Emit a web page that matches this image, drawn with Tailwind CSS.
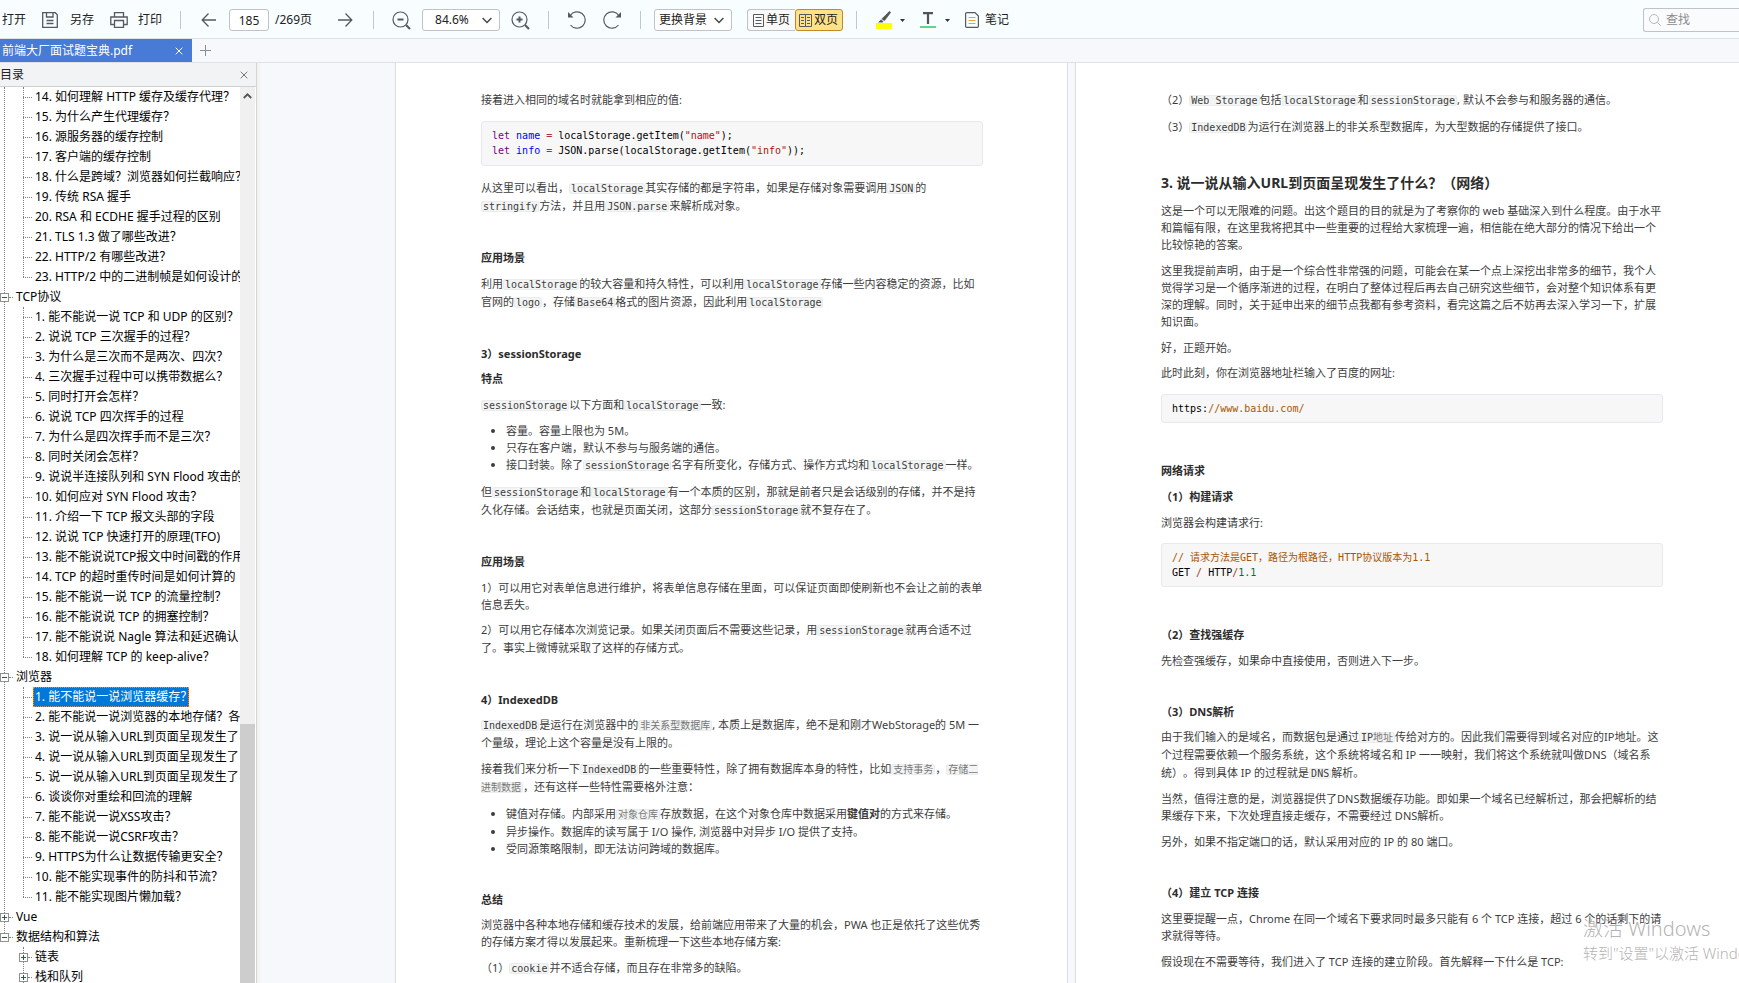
<!DOCTYPE html>
<html lang="zh-CN">
<head>
<meta charset="utf-8">
<title>前端大厂面试题宝典.pdf</title>
<script src="https://cdn.jsdelivr.net/npm/@tailwindcss/browser@4"></script>
</head>
<body class="flex h-screen flex-col overflow-hidden bg-[#f7f8fb] font-['Noto_Sans','Noto_Sans_CJK_SC',sans-serif] text-xs text-black [text-spacing-trim:space-all]">

<!-- Toolbar -->
<header class="flex h-[39px] shrink-0 items-center whitespace-nowrap border-b border-[#dfe1e5] bg-[#f8fdff] pl-[2px] pt-[2px] text-xs text-[#222]">
  <button type="button">打开</button>
  <button type="button" class="ml-4 flex items-center gap-3">
    <svg class="h-4 w-4" viewBox="0 0 16 16" fill="none" stroke="#555a60" stroke-width="1.3"><path d="M1 .7h12.3L15.300 2.700v12.600H.7V.7z"/><path d="M4.500 .7v4.300h6.500V.7M4.500 8.500h7M4.500 11.500h7"/></svg>另存</button>
  <button type="button" class="ml-4 flex items-center gap-[10px]">
    <svg class="h-4 w-[18px]" viewBox="0 0 18 16" fill="none" stroke="#555a60" stroke-width="1.3"><path d="M4.500 5V.7h9V5M4.500 12.500H.8V5h16.400v7.500h-3.700"/><path d="M4.500 8.500h9v6.800h-9z"/></svg>打印</button>
  <span class="ml-[18px] h-[18px] w-px bg-[#c3c6ca]"></span>
  <button type="button" aria-label="上一页" class="ml-5"><svg class="h-4 w-4" viewBox="0 0 16 16" fill="none" stroke="#555a60" stroke-width="1.3"><path d="M15 8H1.200M7.500 1.500 1.200 8l6.300 6.500"/></svg></button>
  <input aria-label="页码" value="185" class="ml-3 h-[22px] w-10 rounded-[3px] border border-[#bfc3c8] bg-white text-center text-xs">
  <span class="ml-[6px] w-[52px]">/269页</span>
  <button type="button" aria-label="下一页" class="ml-[10px]"><svg class="h-4 w-4" viewBox="0 0 16 16" fill="none" stroke="#555a60" stroke-width="1.3"><path d="M1 8h13.800M8.500 1.500 14.800 8l-6.300 6.500"/></svg></button>
  <span class="ml-5 h-[18px] w-px bg-[#c3c6ca]"></span>
  <button type="button" aria-label="缩小" class="ml-[18px]"><svg class="h-[19px] w-[19px]" viewBox="0 0 19 19" fill="none" stroke="#555a60" stroke-width="1.200"><circle cx="8.500" cy="8.500" r="7.500"/><path d="M5.500 8.500h6" stroke-width="2"/><path d="m14 14 4 4" stroke-width="2.200"/></svg></button>
  <div class="relative ml-[11px]">
    <select aria-label="缩放比例" class="h-[22px] w-[78px] appearance-none rounded-[3px] border border-[#bfc3c8] bg-white pl-3 text-xs"><option>84.6%</option></select>
    <svg class="pointer-events-none absolute right-[8px] top-2 h-[7px] w-[10px]" viewBox="0 0 10 7" fill="none" stroke="#444" stroke-width="1.400"><path d="m.6 1 4.400 4.500L9.400 1"/></svg>
  </div>
  <button type="button" aria-label="放大" class="ml-[11px]"><svg class="h-[19px] w-[19px]" viewBox="0 0 19 19" fill="none" stroke="#555a60" stroke-width="1.200"><circle cx="8.500" cy="8.500" r="7.500"/><path d="M5.500 8.500h6M8.500 5.500v6" stroke-width="2"/><path d="m14 14 4 4" stroke-width="2.200"/></svg></button>
  <span class="ml-[18px] h-[18px] w-px bg-[#c3c6ca]"></span>
  <button type="button" aria-label="撤销" class="ml-[18px]"><svg class="h-5 w-5" viewBox="0 0 20 20" fill="none" stroke="#555a60" stroke-width="1.200"><path d="M3.200 5.500A8.200 8.200 0 1 1 3.500 15"/><path d="M1 2v5.500h5.500z" fill="#555a60" stroke="none"/></svg></button>
  <button type="button" aria-label="重做" class="ml-[15px]"><svg class="h-5 w-5" viewBox="0 0 20 20" fill="none" stroke="#555a60" stroke-width="1.200"><path d="M16.800 5.500A8.200 8.200 0 1 0 16.500 15"/><path d="M19 2v5.500h-5.500z" fill="#555a60" stroke="none"/></svg></button>
  <span class="ml-[18px] h-[18px] w-px bg-[#c3c6ca]"></span>
  <div class="relative ml-[13px]">
    <select aria-label="更换背景" class="h-[22px] w-[78px] appearance-none rounded-[3px] border border-[#bfc3c8] bg-white pl-1 text-xs"><option>更换背景</option></select>
    <svg class="pointer-events-none absolute right-[8px] top-2 h-[7px] w-[10px]" viewBox="0 0 10 7" fill="none" stroke="#444" stroke-width="1.400"><path d="m.6 1 4.400 4.500L9.400 1"/></svg>
  </div>
  <div class="ml-[15px] flex">
    <button type="button" aria-pressed="false" class="flex h-[22px] w-12 items-center gap-[2px] rounded-l-[3px] border border-r-0 border-[#bfc3c8] bg-[#f9f9f9] pl-[5px]">
      <svg class="h-[13px] w-[11px] shrink-0" viewBox="0 0 11 13" fill="none" stroke="#555a60"><path d="M.5.5h10v12H.5zM2.500 3.500h6M2.500 6.500h6M2.500 9.500h6"/></svg>单页</button>
    <button type="button" aria-pressed="true" class="flex h-[22px] w-12 items-center gap-[2px] rounded-[3px] border border-[#c08a2c] bg-[#ffe186] pl-[3px]">
      <svg class="h-[13px] w-[13px] shrink-0" viewBox="0 0 13 13" fill="none" stroke="#555a60"><path d="M.5.5h12v12H.5zM6.500.5v12M2 3.500h3M2 6.500h3M2 9.500h3M8 3.500h3M8 6.500h3M8 9.500h3"/></svg>双页</button>
  </div>
  <span class="ml-[13px] h-[18px] w-px bg-[#c3c6ca]"></span>
  <button type="button" aria-label="高亮" class="ml-[19px] flex items-center gap-2"><svg class="h-[18px] w-4" viewBox="0 0 16 18"><path d="M0 12h16v6H0z" fill="#ff0"/><path d="M13.500 0 15 1.500 8.500 10 5.500 8zM5 8.500 7.500 10.500 6.500 11.500H2z" fill="#555"/></svg><svg class="h-[3px] w-[5px]" viewBox="0 0 5 3"><path d="M0 0h5L2.500 3z" fill="#333"/></svg></button>
  <button type="button" aria-label="文字颜色" class="ml-[15px] flex items-center gap-[9px]"><svg class="h-4 w-4" viewBox="0 0 16 16"><path d="M0 14h16v2H0z" fill="#6bd089"/><path d="M3 0h10v2.200H9.100V12H6.900V2.200H3z" fill="#555"/></svg><svg class="h-[3px] w-[5px]" viewBox="0 0 5 3"><path d="M0 0h5L2.500 3z" fill="#333"/></svg></button>
  <button type="button" class="ml-[15px] flex items-center gap-[6px]"><svg class="h-4 w-[14px]" viewBox="0 0 14 16" fill="none"><path d="M2 .6h8L13.400 4v10.200q0 1.200-1.200 1.200H1.800Q.6 15.400.6 14.200V1.800Q.6.6 2 .6z" stroke="#555a60" stroke-width="1.200"/><path d="M3.500 5.500h7M3.500 8.500h7M3.500 11.500h7" stroke="#e3a92c" stroke-width="1.200"/></svg>笔记</button>
  <label class="ml-auto flex h-6 w-24 items-center gap-[5px] overflow-hidden rounded-l-[3px] border border-r-0 border-[#bfc3c8] bg-[#fafbfc] pl-[5px]">
    <svg class="h-3 w-3 shrink-0" viewBox="0 0 12 12" fill="none" stroke="#b3b7bc"><circle cx="5" cy="5" r="4.500"/><path d="m8.300 8.300 3.400 3.400"/></svg>
    <input type="search" aria-label="查找" placeholder="查找" class="w-full bg-transparent text-xs outline-none placeholder:text-[#8c8c8c]">
  </label>
</header>

<!-- Tabs -->
<nav class="flex h-6 shrink-0 items-center border-b border-[#dfe1e5]">
  <div class="flex h-full w-48 items-center justify-between bg-[#477bd6] pl-[2px] pr-[9px] text-white">
    <a href="#doc">前端大厂面试题宝典.pdf</a>
    <button type="button" aria-label="关闭标签"><svg class="h-2 w-2" viewBox="0 0 8 8" stroke="#fff"><path d="m.7.7 6.600 6.600M7.300.7.7 7.300"/></svg></button>
  </div>
  <button type="button" aria-label="新建标签" class="ml-2"><svg class="h-[11px] w-[11px]" viewBox="0 0 11 11" stroke="#8a8d91"><path d="M5.500 0v11M0 5.500h11"/></svg></button>
</nav>

<div class="flex min-h-0 flex-1">
  <!-- Outline -->
  <aside class="flex w-[257px] shrink-0 flex-col border-r border-[#d4d4d4] bg-white">
    <div class="flex h-6 shrink-0 items-center justify-between border-b border-[#d0d0d0] bg-[#f2f3f5] pr-2 text-[#222]">
      <h2>目录</h2>
      <button type="button" aria-label="关闭目录"><svg class="h-2 w-2" viewBox="0 0 8 8" stroke="#777"><path d="m.7.7 6.600 6.600M7.300.7.7 7.300"/></svg></button>
    </div>
    <div class="flex min-h-0 flex-1">
      <div class="w-60 shrink-0 overflow-hidden whitespace-nowrap leading-5">
        <ul class="relative before:absolute before:left-1 before:top-0 before:h-[850px] before:border-l before:border-dotted before:border-[#808080]">
          <li>
            <ul class="relative before:absolute before:bottom-[10px] before:left-[23px] before:top-0 before:border-l before:border-dotted before:border-[#808080] [&>li]:relative [&>li]:h-5 [&>li]:pl-[35px] [&>li]:before:absolute [&>li]:before:left-[23px] [&>li]:before:top-[10px] [&>li]:before:w-[9px] [&>li]:before:border-t [&>li]:before:border-dotted [&>li]:before:border-[#808080]">
              <li><a href="#c14">14. 如何理解 HTTP 缓存及缓存代理？</a></li>
              <li><a href="#c15">15. 为什么产生代理缓存？</a></li>
              <li><a href="#c16">16. 源服务器的缓存控制</a></li>
              <li><a href="#c17">17. 客户端的缓存控制</a></li>
              <li><a href="#c18">18. 什么是跨域？浏览器如何拦截响应？</a></li>
              <li><a href="#c19">19. 传统 RSA 握手</a></li>
              <li><a href="#c20">20. RSA 和 ECDHE 握手过程的区别</a></li>
              <li><a href="#c21">21. TLS 1.3 做了哪些改进？</a></li>
              <li><a href="#c22">22. HTTP/2 有哪些改进？</a></li>
              <li><a href="#c23">23. HTTP/2 中的二进制帧是如何设计的</a></li>
            </ul>
          </li>
          <li>
            <div class="relative flex h-5 items-center">
              <button type="button" aria-label="折叠" class="flex h-[9px] w-[9px] items-center justify-center border border-[#919191] bg-white"><span class="h-px w-[5px] bg-[#2d4d9c]"></span></button>
              <span class="mr-[3px] w-1 border-t border-dotted border-[#808080]"></span>
              <a href="#tcp">TCP协议</a>
            </div>
            <ul class="relative before:absolute before:bottom-[10px] before:left-[23px] before:top-0 before:border-l before:border-dotted before:border-[#808080] [&>li]:relative [&>li]:h-5 [&>li]:pl-[35px] [&>li]:before:absolute [&>li]:before:left-[23px] [&>li]:before:top-[10px] [&>li]:before:w-[9px] [&>li]:before:border-t [&>li]:before:border-dotted [&>li]:before:border-[#808080]">
              <li><a href="#t1">1. 能不能说一说 TCP 和 UDP 的区别？</a></li>
              <li><a href="#t2">2. 说说 TCP 三次握手的过程？</a></li>
              <li><a href="#t3">3. 为什么是三次而不是两次、四次？</a></li>
              <li><a href="#t4">4. 三次握手过程中可以携带数据么？</a></li>
              <li><a href="#t5">5. 同时打开会怎样？</a></li>
              <li><a href="#t6">6. 说说 TCP 四次挥手的过程</a></li>
              <li><a href="#t7">7. 为什么是四次挥手而不是三次？</a></li>
              <li><a href="#t8">8. 同时关闭会怎样？</a></li>
              <li><a href="#t9">9. 说说半连接队列和 SYN Flood 攻击的</a></li>
              <li><a href="#t10">10. 如何应对 SYN Flood 攻击？</a></li>
              <li><a href="#t11">11. 介绍一下 TCP 报文头部的字段</a></li>
              <li><a href="#t12">12. 说说 TCP 快速打开的原理(TFO)</a></li>
              <li><a href="#t13">13. 能不能说说TCP报文中时间戳的作用</a></li>
              <li><a href="#t14">14. TCP 的超时重传时间是如何计算的</a></li>
              <li><a href="#t15">15. 能不能说一说 TCP 的流量控制？</a></li>
              <li><a href="#t16">16. 能不能说说 TCP 的拥塞控制？</a></li>
              <li><a href="#t17">17. 能不能说说 Nagle 算法和延迟确认</a></li>
              <li><a href="#t18">18. 如何理解 TCP 的 keep-alive？</a></li>
            </ul>
          </li>
          <li>
            <div class="relative flex h-5 items-center">
              <button type="button" aria-label="折叠" class="flex h-[9px] w-[9px] items-center justify-center border border-[#919191] bg-white"><span class="h-px w-[5px] bg-[#2d4d9c]"></span></button>
              <span class="mr-[3px] w-1 border-t border-dotted border-[#808080]"></span>
              <a href="#browser">浏览器</a>
            </div>
            <ul class="relative before:absolute before:bottom-[10px] before:left-[23px] before:top-0 before:border-l before:border-dotted before:border-[#808080] [&>li]:relative [&>li]:h-5 [&>li]:pl-[35px] [&>li]:before:absolute [&>li]:before:left-[23px] [&>li]:before:top-[10px] [&>li]:before:w-[9px] [&>li]:before:border-t [&>li]:before:border-dotted [&>li]:before:border-[#808080]">
              <li class="flex"><a href="#b1" class="-ml-[2px] flex h-5 w-[156px] items-center overflow-hidden border border-dotted border-[#ff8728] bg-[#0078d7] pl-px text-white">1. 能不能说一说浏览器缓存？</a></li>
              <li><a href="#b2">2. 能不能说一说浏览器的本地存储？各</a></li>
              <li><a href="#b3">3. 说一说从输入URL到页面呈现发生了</a></li>
              <li><a href="#b4">4. 说一说从输入URL到页面呈现发生了</a></li>
              <li><a href="#b5">5. 说一说从输入URL到页面呈现发生了</a></li>
              <li><a href="#b6">6. 谈谈你对重绘和回流的理解</a></li>
              <li><a href="#b7">7. 能不能说一说XSS攻击？</a></li>
              <li><a href="#b8">8. 能不能说一说CSRF攻击？</a></li>
              <li><a href="#b9">9. HTTPS为什么让数据传输更安全？</a></li>
              <li><a href="#b10">10. 能不能实现事件的防抖和节流？</a></li>
              <li><a href="#b11">11. 能不能实现图片懒加载？</a></li>
            </ul>
          </li>
          <li class="relative flex h-5 items-center">
            <button type="button" aria-label="展开" class="relative flex h-[9px] w-[9px] items-center justify-center border border-[#919191] bg-white"><span class="h-px w-[5px] bg-[#2d4d9c]"></span><span class="absolute h-[5px] w-px bg-[#2d4d9c]"></span></button>
            <span class="mr-[3px] w-1 border-t border-dotted border-[#808080]"></span>
            <a href="#vue">Vue</a>
          </li>
          <li>
            <div class="relative flex h-5 items-center">
              <button type="button" aria-label="折叠" class="flex h-[9px] w-[9px] items-center justify-center border border-[#919191] bg-white"><span class="h-px w-[5px] bg-[#2d4d9c]"></span></button>
              <span class="mr-[3px] w-1 border-t border-dotted border-[#808080]"></span>
              <a href="#algo">数据结构和算法</a>
            </div>
            <ul class="relative pl-[19px] before:absolute before:bottom-0 before:left-[23px] before:top-0 before:border-l before:border-dotted before:border-[#808080]">
              <li class="relative flex h-5 items-center">
                <button type="button" aria-label="展开" class="relative flex h-[9px] w-[9px] items-center justify-center border border-[#919191] bg-white"><span class="h-px w-[5px] bg-[#2d4d9c]"></span><span class="absolute h-[5px] w-px bg-[#2d4d9c]"></span></button>
                <span class="mr-[3px] w-1 border-t border-dotted border-[#808080]"></span>
                <a href="#list">链表</a>
              </li>
              <li class="relative flex h-5 items-center">
                <button type="button" aria-label="展开" class="relative flex h-[9px] w-[9px] items-center justify-center border border-[#919191] bg-white"><span class="h-px w-[5px] bg-[#2d4d9c]"></span><span class="absolute h-[5px] w-px bg-[#2d4d9c]"></span></button>
                <span class="mr-[3px] w-1 border-t border-dotted border-[#808080]"></span>
                <a href="#stack">栈和队列</a>
              </li>
            </ul>
          </li>
        </ul>
      </div>
      <div class="flex w-[15px] flex-col bg-[#f0f0f0]">
        <svg class="mx-auto mt-[6px] h-[6px] w-[9px] shrink-0" viewBox="0 0 9 6" fill="none" stroke="#555" stroke-width="1.800"><path d="m.8 5 3.700-3.700L8.200 5"/></svg>
        <div class="mt-auto h-[259px] bg-[#cdcdcd]"></div>
      </div>
    </div>
  </aside>
  <div class="w-[3px] shrink-0 bg-[#f2f2f3]"></div>

  <!-- Two-page view -->
  <main id="doc" class="relative flex min-w-0 flex-1 gap-[7px] overflow-hidden whitespace-nowrap pl-[135px] text-[11px] leading-[17px] text-[#3d3d3d] [&_code]:rounded-[3px] [&_code]:bg-[#f3f4f4] [&_code]:px-[2px] [&_code]:font-['DejaVu_Sans_Mono','Noto_Sans_CJK_SC',monospace] [&_code]:text-[10px] [&_code]:leading-3 [&_code]:ring-1 [&_code]:ring-inset [&_code]:ring-[#eaecee] [&_h3]:font-bold [&_h3]:text-[#2c2c2c] [&_pre]:rounded-[3px] [&_pre]:border [&_pre]:border-[#e7eaed] [&_pre]:bg-[#f7f7f7] [&_pre]:px-[10px] [&_pre]:font-['DejaVu_Sans_Mono','Noto_Sans_CJK_SC',monospace] [&_pre]:text-[10px] [&_pre]:leading-[15px] [&_pre]:text-black">
    <article class="w-[673px] shrink-0 border-x border-[#dcdde0] bg-white pl-[85px] pr-[84px] pt-7">
      <p>接着进入相同的域名时就能拿到相应的值:</p>
      <pre class="mt-[13px] pb-[7px] pt-[6px]"><span class="text-[#770088]">let</span> <span class="text-[#0000ff]">name</span> <span class="text-[#b03030]">=</span> localStorage.getItem(<span class="text-[#aa1111]">"name"</span>);
<span class="text-[#770088]">let</span> <span class="text-[#0000ff]">info</span> <span class="text-[#b03030]">=</span> JSON.parse(localStorage.getItem(<span class="text-[#aa1111]">"info"</span>));</pre>
      <p class="mt-[13px] leading-[18px]">从这里可以看出，<code>localStorage</code>其实存储的都是字符串，如果是存储对象需要调用<code>JSON</code>的<br><code>stringify</code>方法，并且用<code>JSON.parse</code>来解析成对象。</p>
      <h3 class="mt-[34px]">应用场景</h3>
      <p class="mt-[9px] leading-[18px]">利用<code>localStorage</code>的较大容量和持久特性，可以利用<code>localStorage</code>存储一些内容稳定的资源，比如<br>官网的<code>logo</code>，存储<code>Base64</code>格式的图片资源，因此利用<code>localStorage</code></p>
      <h3 class="mt-[34px]">3）sessionStorage</h3>
      <h3 class="mt-2">特点</h3>
      <p class="mt-[9px] leading-[18px]"><code>sessionStorage</code>以下方面和<code>localStorage</code>一致:</p>
      <ul class="mt-2 list-disc pl-[25px]">
        <li>容量。容量上限也为 5M。</li>
        <li>只存在客户端，默认不参与与服务端的通信。</li>
        <li class="leading-[18px]">接口封装。除了<code>sessionStorage</code>名字有所变化，存储方式、操作方式均和<code>localStorage</code>一样。</li>
      </ul>
      <p class="mt-[9px] leading-[18px]">但<code>sessionStorage</code>和<code>localStorage</code>有一个本质的区别，那就是前者只是会话级别的存储，并不是持<br>久化存储。会话结束，也就是页面关闭，这部分<code>sessionStorage</code>就不复存在了。</p>
      <h3 class="mt-[34px]">应用场景</h3>
      <p class="mt-[9px]">1）可以用它对表单信息进行维护，将表单信息存储在里面，可以保证页面即使刷新也不会让之前的表单<br>信息丢失。</p>
      <p class="mt-2 leading-[18px]">2）可以用它存储本次浏览记录。如果关闭页面后不需要这些记录，用<code>sessionStorage</code>就再合适不过<br>了。事实上微博就采取了这样的存储方式。</p>
      <h3 class="mt-[34px]">4）IndexedDB</h3>
      <p class="mt-2 leading-[18px]"><code>IndexedDB</code>是运行在浏览器中的<code class="text-[#777]">非关系型数据库</code>, 本质上是数据库，绝不是和刚才WebStorage的 5M 一<br>个量级，理论上这个容量是没有上限的。</p>
      <p class="mt-2 leading-[18px]">接着我们来分析一下<code>IndexedDB</code>的一些重要特性，除了拥有数据库本身的特性，比如<code class="text-[#777]">支持事务</code>，<code class="text-[#777]">存储二<br>进制数据</code>，还有这样一些特性需要格外注意：</p>
      <ul class="mt-[9px] list-disc pl-[25px]">
        <li class="leading-[18px]">键值对存储。内部采用<code class="text-[#777]">对象仓库</code>存放数据，在这个对象仓库中数据采用<strong>键值对</strong>的方式来存储。</li>
        <li>异步操作。数据库的读写属于 I/O 操作, 浏览器中对异步 I/O 提供了支持。</li>
        <li>受同源策略限制，即无法访问跨域的数据库。</li>
      </ul>
      <h3 class="mt-[34px]">总结</h3>
      <p class="mt-2">浏览器中各种本地存储和缓存技术的发展，给前端应用带来了大量的机会，PWA 也正是依托了这些优秀<br>的存储方案才得以发展起来。重新梳理一下这些本地存储方案:</p>
      <p class="mt-[9px] leading-[18px]">（1）<code>cookie</code>并不适合存储，而且存在非常多的缺陷。</p>
    </article>

    <article class="w-[673px] shrink-0 border-x border-[#dcdde0] bg-white pl-[85px] pr-[84px] pt-7">
      <p class="leading-[18px]">（2）<code>Web Storage</code>包括<code>localStorage</code>和<code>sessionStorage</code>, 默认不会参与和服务器的通信。</p>
      <p class="mt-[9px] leading-[18px]">（3）<code>IndexedDB</code>为运行在浏览器上的非关系型数据库，为大型数据的存储提供了接口。</p>
      <h2 class="mt-9 text-sm font-bold leading-[22px] text-[#2c2c2c]">3. 说一说从输入URL到页面呈现发生了什么？（网络）</h2>
      <p class="mt-2">这是一个可以无限难的问题。出这个题目的目的就是为了考察你的 web 基础深入到什么程度。由于水平<br>和篇幅有限，在这里我将把其中一些重要的过程给大家梳理一遍，相信能在绝大部分的情况下给出一个<br>比较惊艳的答案。</p>
      <p class="mt-[9px]">这里我提前声明，由于是一个综合性非常强的问题，可能会在某一个点上深挖出非常多的细节，我个人<br>觉得学习是一个循序渐进的过程，在明白了整体过程后再去自己研究这些细节，会对整个知识体系有更<br>深的理解。同时，关于延申出来的细节点我都有参考资料，看完这篇之后不妨再去深入学习一下，扩展<br>知识面。</p>
      <p class="mt-[9px]">好，正题开始。</p>
      <p class="mt-2">此时此刻，你在浏览器地址栏输入了百度的网址:</p>
      <pre class="mt-[13px] py-[6px]">https:<span class="text-[#aa5500]">//www.baidu.com/</span></pre>
      <h3 class="mt-[39px]">网络请求</h3>
      <h3 class="mt-[9px]">（1）构建请求</h3>
      <p class="mt-[9px]">浏览器会构建请求行:</p>
      <pre class="mt-3 py-[6px]"><span class="text-[#aa5500]">// 请求方法是GET，路径为根路径，HTTP协议版本为1.1</span>
GET <span class="text-[#b03030]">/</span> HTTP<span class="text-[#b03030]">/</span><span class="text-[#116644]">1.1</span></pre>
      <h3 class="mt-[39px]">（2）查找强缓存</h3>
      <p class="mt-[9px]">先检查强缓存，如果命中直接使用，否则进入下一步。</p>
      <h3 class="mt-[34px]">（3）DNS解析</h3>
      <p class="mt-2 leading-[18px]">由于我们输入的是域名，而数据包是通过<code>IP<span class="text-[#777]">地址</span></code>传给对方的。因此我们需要得到域名对应的IP地址。这<br>个过程需要依赖一个服务系统，这个系统将域名和 IP 一一映射，我们将这个系统就叫做DNS（域名系<br>统）。得到具体 IP 的过程就是<code>DNS</code>解析。</p>
      <p class="mt-2">当然，值得注意的是，浏览器提供了DNS数据缓存功能。即如果一个域名已经解析过，那会把解析的结<br>果缓存下来，下次处理直接走缓存，不需要经过 DNS解析。</p>
      <p class="mt-[9px]">另外，如果不指定端口的话，默认采用对应的 IP 的 80 端口。</p>
      <h3 class="mt-[34px]">（4）建立 TCP 连接</h3>
      <p class="mt-[9px]">这里要提醒一点，Chrome 在同一个域名下要求同时最多只能有 6 个 TCP 连接，超过 6 个的话剩下的请<br>求就得等待。</p>
      <p class="mt-[9px]">假设现在不需要等待，我们进入了 TCP 连接的建立阶段。首先解释一下什么是 TCP:</p>
    </article>

    <!-- System activation notice, drawn over the page -->
    <div class="pointer-events-none absolute bottom-[19px] left-[1323px] font-light text-[#a0a0a0]/80">
      <p class="text-xl leading-[26px]">激活 Windows</p>
      <p class="text-[15px] leading-[22px]">转到"设置"以激活 Windows。</p>
    </div>
  </main>
</div>
</body>
</html></script>
